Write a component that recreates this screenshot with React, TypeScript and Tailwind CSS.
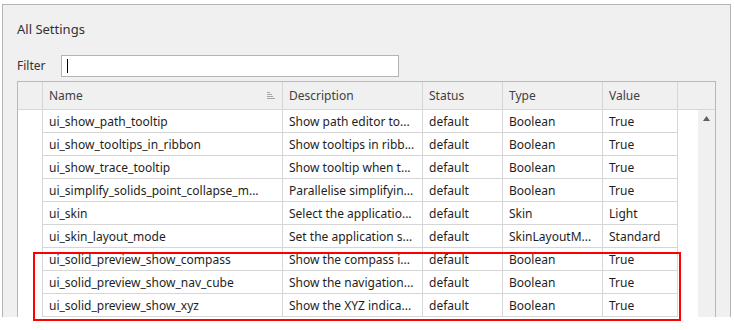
const rows = [
  ["ui_show_path_tooltip", "Show path editor to...", "default", "Boolean", "True"],
  ["ui_show_tooltips_in_ribbon", "Show tooltips in ribb...", "default", "Boolean", "True"],
  ["ui_show_trace_tooltip", "Show tooltip when t...", "default", "Boolean", "True"],
  ["ui_simplify_solids_point_collapse_m...", "Parallelise simplifyin...", "default", "Boolean", "True"],
  ["ui_skin", "Select the applicatio...", "default", "Skin", "Light"],
  ["ui_skin_layout_mode", "Set the application s...", "default", "SkinLayoutM...", "Standard"],
  ["ui_solid_preview_show_compass", "Show the compass i...", "default", "Boolean", "True"],
  ["ui_solid_preview_show_nav_cube", "Show the navigation...", "default", "Boolean", "True"],
  ["ui_solid_preview_show_xyz", "Show the XYZ indica...", "default", "Boolean", "True"],
];

const widths = ["w-[240px]", "w-[140px]", "w-[80px]", "w-[100px]", "w-[75px]"];

function SortGlyph() {
  return (
    <svg width="8" height="7" viewBox="0 0 8 7" className="shrink-0">
      <rect x="0" y="0" width="3" height="1" fill="#a6a6a6" />
      <rect x="0" y="2" width="5" height="1" fill="#a6a6a6" />
      <rect x="0" y="4" width="6" height="1" fill="#a6a6a6" />
      <rect x="0" y="6" width="8" height="1" fill="#a6a6a6" />
    </svg>
  );
}

export default function App() {
  return (
    <div className="relative w-[734px] h-[330px] bg-white pl-[2px] pt-[4px] font-['Noto_Sans',sans-serif] text-[12px]">
      <div className="w-[729px] h-[313px] bg-[#f0f0f0] border-l border-t border-r border-[#b4b4b4] pl-[14px] pt-[14px]">
        <div className="h-5 leading-5 text-[13px] text-[#333]">All Settings</div>

        <div className="flex items-center mt-4 h-[22px]">
          <span className="w-[44px] text-[#333]">Filter</span>
          <div className="w-[338px] h-[22px] bg-white border border-[#b4b4b4] flex items-center pl-[5px]">
            <div className="w-px h-[14px] bg-black" />
          </div>
        </div>

        <div className="mt-1 w-[699px] border-l border-t border-r border-[#b8b8b8] text-[#1e1e1e]">
          <div className="flex h-[28px] bg-[#f0f0f0] border-b border-[#d6d6d6] text-[#404040]">
            <div className="w-[25px] border-r border-[#d6d6d6]" />
            <div className="w-[240px] border-r border-[#d6d6d6] flex items-center justify-between pl-[6px] pr-[7px]">
              <span>Name</span>
              <SortGlyph />
            </div>
            <div className="w-[140px] border-r border-[#d6d6d6] flex items-center pl-[6px]">Description</div>
            <div className="w-[80px] border-r border-[#d6d6d6] flex items-center pl-[6px]">Status</div>
            <div className="w-[100px] border-r border-[#d6d6d6] flex items-center pl-[6px]">Type</div>
            <div className="w-[75px] border-r border-[#d6d6d6] flex items-center pl-[6px]">Value</div>
            <div className="w-[37px]" />
          </div>

          <div className="flex bg-white">
            <div className="w-[25px] border-r border-[#d6d6d6]" />
            <div className="flex flex-col">
              {rows.map((r) => (
                <div key={r[0]} className="flex h-[23px]">
                  {r.map((c, i) => (
                    <div
                      key={i}
                      className={`${widths[i]} border-r border-b border-[#d6d6d6] flex items-center pl-[6px] pt-px whitespace-nowrap overflow-hidden`}
                    >
                      {c}
                    </div>
                  ))}
                </div>
              ))}
            </div>
            <div className="w-[20px]" />
            <div className="w-[17px] bg-[#f0f0f0] flex justify-center pt-[6px]">
              <svg width="7" height="5" viewBox="0 0 7 5">
                <polygon points="3.5,0 7,5 0,5" fill="#606060" />
              </svg>
            </div>
          </div>
        </div>
      </div>

      <div className="absolute left-[33px] top-[252px] w-[648px] h-[69px] border-2 border-[#ff0000]" />
    </div>
  );
}
